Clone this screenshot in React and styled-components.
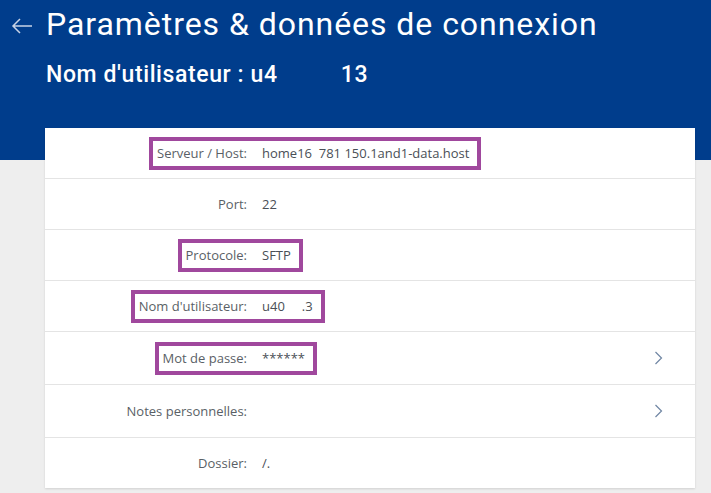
import React from "react";
import styled, { createGlobalStyle } from "styled-components";

const GlobalStyle = createGlobalStyle`
  html, body {
    margin: 0;
    padding: 0;
    background: #eeeeee;
  }
`;

const fields = [
  { label: "Serveur / Host:", value: "home16\u00a0\u00a0781\u00a0150.1and1-data.host", marked: true },
  { label: "Port:", value: "22" },
  { label: "Protocole:", value: "SFTP", marked: true },
  { label: "Nom d'utilisateur:", value: "u40\u00a0\u00a0\u00a0\u00a0\u00a0.3", marked: true },
  { label: "Mot de passe:", value: "******", marked: true, link: true },
  { label: "Notes personnelles:", value: "", link: true },
  { label: "Dossier:", value: "/." },
];

const Chevron = () => (
  <svg width="9" height="14" viewBox="0 0 9 14" fill="none">
    <path d="M1.5 1 L7.5 7 L1.5 13" stroke="#6f86a3" strokeWidth="1.2" />
  </svg>
);

const BackArrow = () => (
  <svg width="22" height="16" viewBox="0 0 22 16" fill="none">
    <path d="M21 8 H2 M9 1 L2 8 L9 15" stroke="#c7d3e6" strokeWidth="1.5" />
  </svg>
);

export default function App() {
  return (
    <Page>
      <GlobalStyle />
      <Header>
        <TitleRow>
          <BackButton>
            <BackArrow />
          </BackButton>
          <Title>Paramètres &amp; données de connexion</Title>
        </TitleRow>
        <Subtitle>Nom d'utilisateur : u4{"\u00a0\u00a0\u00a0\u00a0\u00a0\u00a0\u00a0\u00a0\u00a0\u00a0"}13</Subtitle>
      </Header>
      <Card>
        {fields.map((f) => (
          <Row key={f.label} tall={f.link}>
            <LabelCell>
              <Label marked={f.marked}>{f.label}</Label>
            </LabelCell>
            <Value marked={f.marked} empty={!f.value}>{f.value}</Value>
            {f.link && (
              <ChevronCell>
                <Chevron />
              </ChevronCell>
            )}
          </Row>
        ))}
      </Card>
    </Page>
  );
}

const Page = styled.div`
  width: 711px;
  min-height: 493px;
  background: #eeeeee;
  font-family: "Open Sans", "Liberation Sans", sans-serif;
`;

const Header = styled.div`
  height: 160px;
  background: #003d8c;
  box-sizing: border-box;
  padding: 4px 0 0 0;
  display: flex;
  flex-direction: column;
`;

const TitleRow = styled.div`
  display: flex;
  align-items: center;
  height: 40px;
`;

const BackButton = styled.div`
  width: 46px;
  display: flex;
  justify-content: center;
  padding-right: 2px;
  box-sizing: border-box;
  margin-top: 4px;
`;

const Title = styled.h1`
  margin: 0;
  font-family: Roboto, "Liberation Sans", sans-serif;
  font-weight: 400;
  font-size: 32px;
  line-height: 40px;
  color: #ffffff;
  letter-spacing: 0.95px;
`;

const Subtitle = styled.div`
  margin: 16px 0 0 46px;
  font-family: Roboto, "Liberation Sans", sans-serif;
  font-weight: 500;
  font-size: 23px;
  line-height: 30px;
  color: #ffffff;
  letter-spacing: 0.6px;
`;

const Card = styled.div`
  margin: -32px 0 0 45px;
  width: 650px;
  background: #ffffff;
  box-shadow: 0 1px 2px rgba(0, 0, 0, 0.12);
  display: flex;
  flex-direction: column;
`;

const Row = styled.div`
  display: flex;
  align-items: center;
  height: ${(p) => (p.tall ? "52px" : "50px")};
  border-bottom: 1px solid #e4e4e4;
  font-size: 13px;
  color: #555a60;
  &:last-child {
    border-bottom: none;
  }
`;

const LabelCell = styled.div`
  flex: 0 0 217px;
  display: flex;
  justify-content: flex-end;
`;

const Label = styled.span`
  display: inline-block;
  line-height: 25px;
  padding: 0 15px 0 4px;
  border: 4px solid ${(p) => (p.marked ? "#a0489d" : "transparent")};
  border-right: none;
  color: #5a5f66;
`;

const Value = styled.span`
  display: ${(p) => (p.empty ? "none" : "inline-block")};
  line-height: 25px;
  padding: 0 8px 0 0;
  border: 4px solid ${(p) => (p.marked ? "#a0489d" : "transparent")};
  border-left: none;
  color: #4a4f56;
`;

const ChevronCell = styled.div`
  margin-left: auto;
  margin-right: 32px;
  display: flex;
  align-items: center;
`;
